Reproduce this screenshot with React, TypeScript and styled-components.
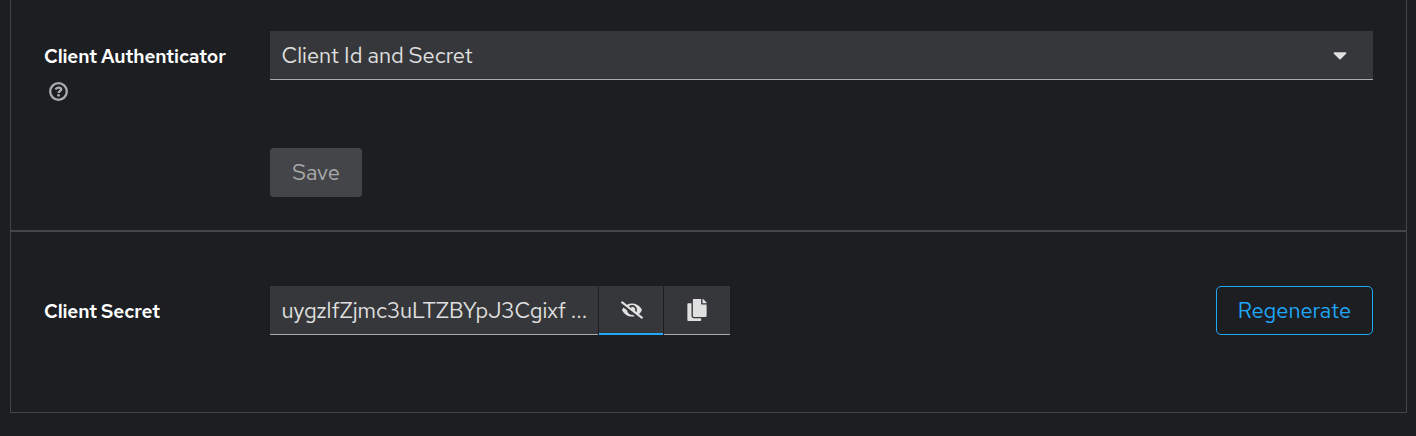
import React from 'react';
import styled, { createGlobalStyle } from 'styled-components';
import { FaCaretDown, FaCopy, FaEyeSlash } from 'react-icons/fa';

const GlobalStyle = createGlobalStyle`
  * { box-sizing: border-box; }
  body {
    margin: 0;
    background: #1d1e22;
    color: #e0e0e0;
    font-family: "Red Hat Text", Lato, "Open Sans", sans-serif;
  }
  button { font-family: inherit; }
`;

const Page = styled.main`
  height: 436px;
  padding: 0 9px 23px 10px;
  overflow: hidden;
`;

const Panel = styled.div`
  height: 413px;
  border: 1px solid #444548;
  border-top: 0;
`;

const Section = styled.section<{ $height: number; $top: number; $divided?: boolean }>`
  height: ${p => p.$height}px;
  padding: ${p => p.$top}px 33px 0;
  border-bottom: ${p => (p.$divided ? '2px solid #444548' : '0')};
`;

const Row = styled.div`
  display: grid;
  grid-template-columns: 226px 1fr;
  align-items: start;
`;

const LabelCell = styled.div`
  padding-top: 14px;
`;

const Label = styled.div`
  color: #fff;
  font-size: 19.1px;
  font-weight: 600;
  line-height: 24px;
  letter-spacing: -0.155px;
  white-space: nowrap;
`;

const HelpButton = styled.button`
  display: flex;
  margin: 13px 0 0 5px;
  padding: 0;
  border: 0;
  background: none;
  color: #aaabac;
`;

const Text = styled.span`
  font-size: 21.82px;
  line-height: 33px;
  white-space: pre;
`;

const Select = styled.div`
  display: flex;
  align-items: center;
  justify-content: space-between;
  height: 49px;
  padding: 0 26px 0 11.4px;
  background: #36373a;
  border-bottom: 1px solid #aaabac;
`;

const Caret = styled(FaCaretDown)`
  width: 14px;
  height: 22px;
`;

const SaveButton = styled.button`
  width: 92px;
  height: 49px;
  margin: 47px 0 0 226px;
  padding: 0;
  border: 0;
  border-radius: 4px;
  background: #444548;
  color: #aaabac;
`;

const SecretControls = styled.div`
  display: flex;
  justify-content: space-between;
`;

const InputGroup = styled.div`
  display: flex;
  gap: 1px;
`;

const SecretField = styled.div`
  width: 328px;
  height: 49px;
  padding: 8px 0 0 11.4px;
  background: #36373a;
  border-bottom: 1px solid #aaabac;
  letter-spacing: -0.025px;
`;

const ControlButton = styled.button<{ $width: number; $active?: boolean }>`
  display: flex;
  align-items: center;
  justify-content: center;
  width: ${p => p.$width}px;
  height: 49px;
  padding: ${p => (p.$active ? '1px 0 0 2px' : '0')};
  border: 0;
  border-bottom: ${p => (p.$active ? '2px solid #1fa7f8' : '1px solid #aaabac')};
  background: #36373a;
  color: #e0e0e0;
  font-size: 22px;
`;

const RegenerateButton = styled.button`
  width: 157px;
  height: 49px;
  padding: 0;
  border: 1px solid #1fa7f8;
  border-radius: 5px;
  background: transparent;
  color: #1fa7f8;
`;

function HelpIcon() {
  return (
    <svg width="19" height="19" viewBox="0 0 19 19" fill="none" stroke="currentColor">
      <circle cx="9.5" cy="9.5" r="8.3" strokeWidth="2.3" />
      <path d="M6.5 7.5C7.2 6 8.2 5.6 9.5 5.6C11.2 5.6 12.2 6.4 12.2 7.6C12.2 9.2 9.6 9 9.6 11.1" strokeWidth="2.4" />
      <circle cx="9.5" cy="13.3" r="1.4" fill="currentColor" stroke="none" />
    </svg>
  );
}

export default function App() {
  return (
    <>
      <GlobalStyle />
      <Page>
        <Panel>
          <Section $height={232} $top={31} $divided>
            <Row>
              <LabelCell>
                <Label>Client Authenticator</Label>
                <HelpButton aria-label="Help"><HelpIcon /></HelpButton>
              </LabelCell>
              <Select>
                <Text>Client Id and Secret</Text>
                <Caret />
              </Select>
            </Row>
            <SaveButton disabled><Text>Save</Text></SaveButton>
          </Section>
          <Section $height={180} $top={54}>
            <Row>
              <LabelCell><Label>Client Secret</Label></LabelCell>
              <SecretControls>
                <InputGroup>
                  <SecretField><Text>uygzlfZjmc3uLTZBYpJ3Cgixf ...</Text></SecretField>
                  <ControlButton $width={64} $active aria-label="Hide secret"><FaEyeSlash /></ControlButton>
                  <ControlButton $width={66} aria-label="Copy secret"><FaCopy /></ControlButton>
                </InputGroup>
                <RegenerateButton><Text>Regenerate</Text></RegenerateButton>
              </SecretControls>
            </Row>
          </Section>
        </Panel>
      </Page>
    </>
  );
}
